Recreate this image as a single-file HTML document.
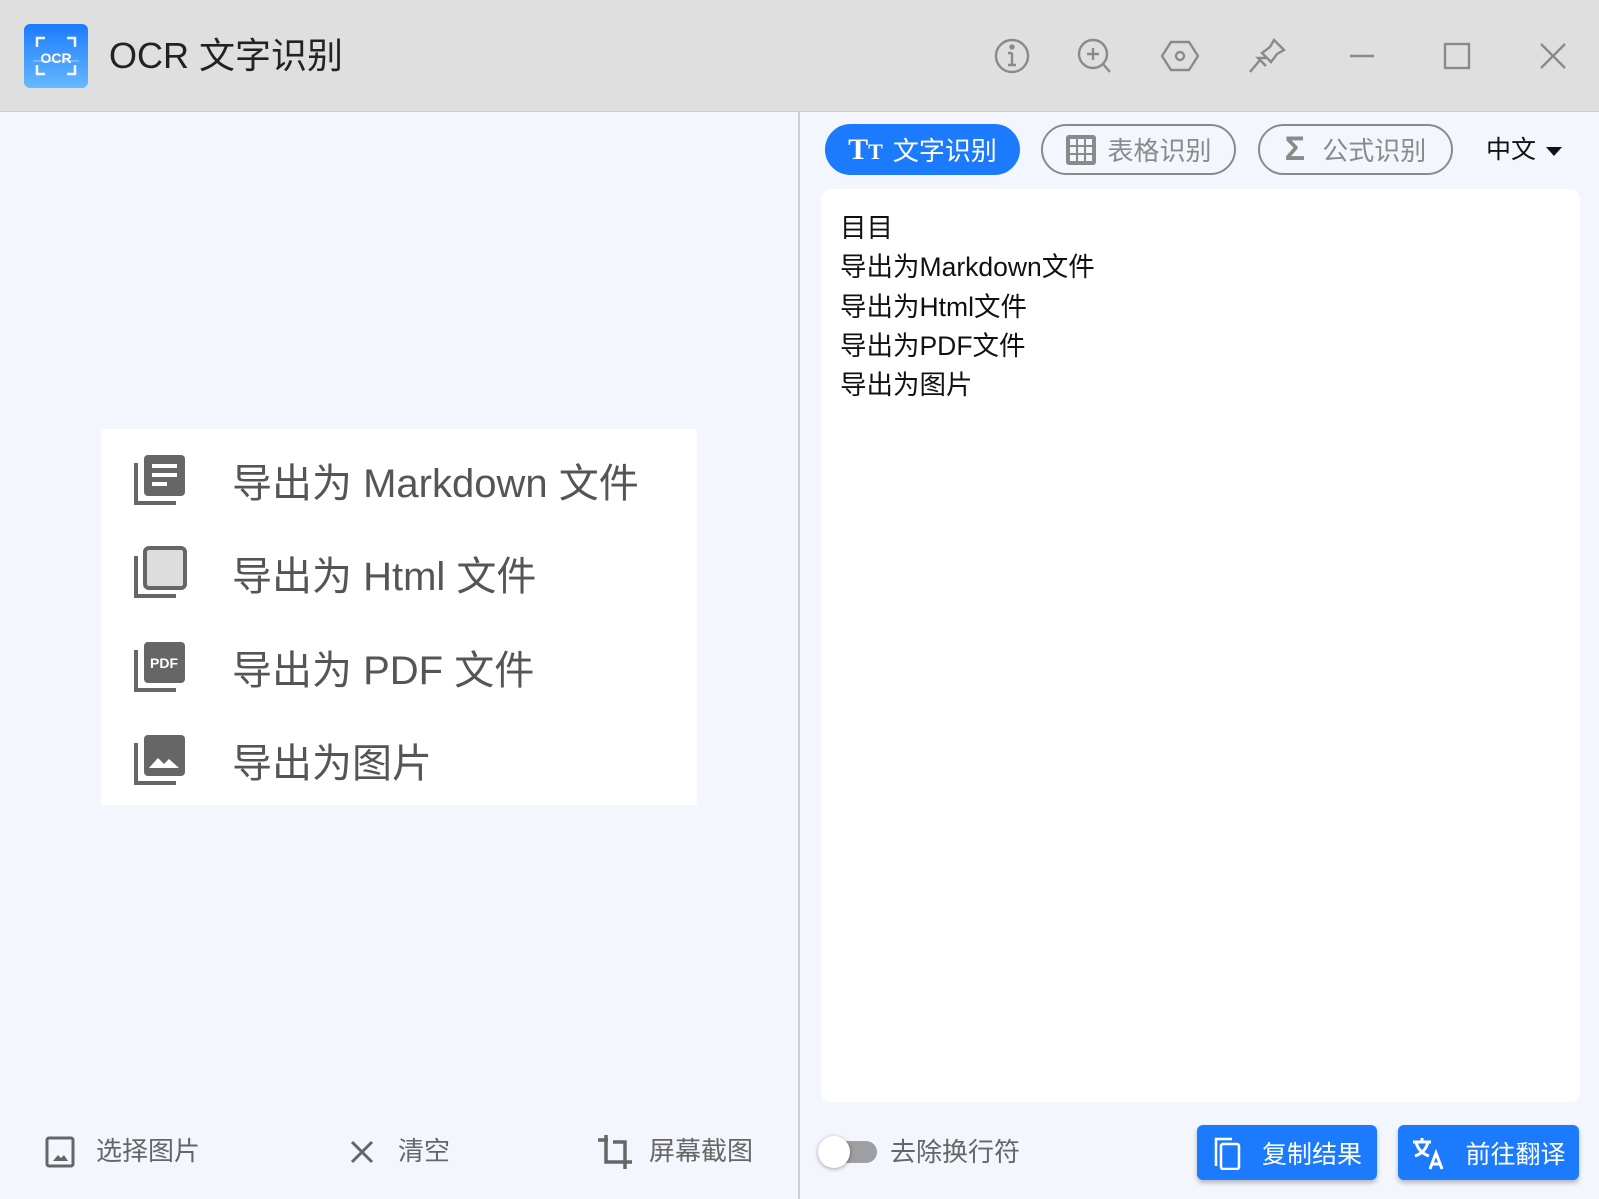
<!DOCTYPE html>
<html><head><meta charset="utf-8"><style>
*{margin:0;padding:0;box-sizing:border-box}
body{width:1599px;height:1199px;background:#f3f6fd;font-family:"Liberation Sans","Noto Sans CJK SC",sans-serif;position:relative;overflow:hidden}
.a{position:absolute}
.title{left:0;top:0;width:1599px;height:112px;background:#dfdfdf;border-bottom:1px solid #d0d0d0}
.t{white-space:nowrap;line-height:1}
svg{display:block}
.pill{height:51px;border-radius:26px;border:2px solid #8a8a8a;color:#8a8a8a;font-size:26px;display:flex;align-items:center;justify-content:center;gap:10px}
.btn{background:#1c7bfd;color:#fff;border-radius:6px;font-size:25px;display:flex;align-items:center;justify-content:center;gap:20px;box-shadow:0 3px 5px rgba(0,0,0,.25)}
.row{display:flex;align-items:center;position:absolute;left:133px;font-size:40px;color:#555}
.row span{margin-left:45px}
.bt{font-size:26px;color:#666}
</style></head><body>
<div class="a title"></div>
<div class="a" style="left:24px;top:24px;width:64px;height:64px;border-radius:6px;background:linear-gradient(#1c7bfd,#66b8ff)">
<svg width="64" height="64"><g fill="none" stroke="#fff" stroke-width="2.5" opacity=".95"><path d="M13 23V14h8M43 14h8v9M13 41v9h8M43 50h8v-9"/></g><text x="32" y="39" fill="#fff" font-size="14" font-weight="bold" text-anchor="middle" font-family="Liberation Sans">OCR</text><path d="M9 37H55" stroke="#fff" opacity=".5"/></svg></div>
<div class="a t" style="left:109px;top:38px;font-size:36px;color:#222">OCR 文字识别</div>
<svg class="a" style="left:992px;top:36px" width="580" height="40" fill="none" stroke="#8a8a8a" stroke-width="2.4">
<circle cx="20" cy="20" r="16"/><path d="M20 17v12M16 29h8M16 17h4"/><circle cx="20" cy="11" r="1.5" fill="#8a8a8a"/>
<circle cx="101" cy="18" r="14"/><path d="M111 28l7 8M101 12v12M95 18h12"/>
<path d="M179 6h18l9 14-9 14h-18l-9-14z"/><circle cx="188" cy="20" r="4"/>
<path d="M282 4l10 10-7 4-6 8-9-9 8-6zM274 22l-8 0 8 8M268 24l-10 12"/>
<path d="M358 20h24"/>
<rect x="453" y="8" width="24" height="24"/>
<path d="M549 8l24 24M573 8l-24 24"/>
</svg>
<div class="a" style="left:798px;top:112px;width:2px;height:1087px;background:#cfcfd3"></div>
<div class="a pill" style="left:825px;top:124px;width:195px;background:#1c7bfd;border-color:#1c7bfd;color:#fff"><b style="font-size:30px;font-family:Liberation Serif">T<small style="font-size:22px">T</small></b>文字识别</div>
<div class="a pill" style="left:1041px;top:124px;width:195px"><svg width="32" height="32"><rect x="1" y="1" width="30" height="30" rx="3" fill="#8a8a8a"/><g fill="#f3f6fd"><rect x="5" y="5" width="6" height="6"/><rect x="13" y="5" width="6" height="6"/><rect x="21" y="5" width="6" height="6"/><rect x="5" y="13" width="6" height="6"/><rect x="13" y="13" width="6" height="6"/><rect x="21" y="13" width="6" height="6"/><rect x="5" y="21" width="6" height="6"/><rect x="13" y="21" width="6" height="6"/><rect x="21" y="21" width="6" height="6"/></g></svg>表格识别</div>
<div class="a pill" style="left:1258px;top:124px;width:195px"><b style="font-size:34px">Σ</b>&nbsp;公式识别</div>
<div class="a t" style="left:1486px;top:138px;font-size:25px;color:#111">中文</div>
<div class="a" style="left:1546px;top:147px;border-left:8px solid transparent;border-right:8px solid transparent;border-top:9px solid #111"></div>
<div class="a" style="left:821px;top:189px;width:759px;height:913px;background:#fff;border-radius:10px"></div>
<div class="a" style="left:840px;top:209px;font-size:26.5px;line-height:39.3px;color:#111">目目<br>导出为Markdown文件<br>导出为Html文件<br>导出为PDF文件<br>导出为图片</div>
<div class="a" style="left:101px;top:429px;width:596px;height:376px;background:#fff"></div>
<div class="row" style="top:451px"><svg width="54" height="54"><path d="M3 10v40h40" fill="none" stroke="#666" stroke-width="4"/><rect x="11" y="2" width="41" height="41" rx="4" fill="#666"/><g fill="#fff"><rect x="19" y="11" width="25" height="4"/><rect x="19" y="20" width="25" height="4"/><rect x="19" y="29" width="15" height="4"/></g></svg><span>导出为 Markdown 文件</span></div>
<div class="row" style="top:544px"><svg width="54" height="54"><path d="M3 10v40h40" fill="none" stroke="#666" stroke-width="4"/><rect x="12" y="2" width="40" height="40" rx="4" fill="#ddd" stroke="#666" stroke-width="4"/></svg><span>导出为 Html 文件</span></div>
<div class="row" style="top:638px"><svg width="54" height="54"><path d="M3 10v40h40" fill="none" stroke="#666" stroke-width="4"/><rect x="11" y="2" width="41" height="41" rx="4" fill="#666"/><text x="31" y="28" fill="#fff" font-size="14" font-weight="bold" text-anchor="middle" font-family="Liberation Sans">PDF</text></svg><span>导出为 PDF 文件</span></div>
<div class="row" style="top:731px"><svg width="54" height="54"><path d="M3 10v40h40" fill="none" stroke="#666" stroke-width="4"/><rect x="11" y="2" width="41" height="41" rx="4" fill="#666"/><path d="M16 35l9-10 6 6 5-5 10 9z" fill="#fff"/></svg><span>导出为图片</span></div>
<svg class="a" style="left:45px;top:1136px" width="30" height="32"><rect x="2" y="2" width="26" height="28" rx="2" fill="none" stroke="#666" stroke-width="3"/><path d="M8 25l5-6 3 3 3-3 4 6z" fill="#666"/></svg>
<div class="a t bt" style="left:96px;top:1138px">选择图片</div>
<svg class="a" style="left:350px;top:1140px" width="24" height="24"><path d="M2 2l20 20M22 2L2 22" stroke="#666" stroke-width="3"/></svg>
<div class="a t bt" style="left:398px;top:1138px">清空</div>
<svg class="a" style="left:596px;top:1133px" width="36" height="38"><path d="M2 7h10M10 2v27h27M17 9h12v27" fill="none" stroke="#666" stroke-width="3.5"/></svg>
<div class="a t bt" style="left:649px;top:1138px">屏幕截图</div>
<div class="a" style="left:823px;top:1141px;width:54px;height:22px;border-radius:11px;background:#9e9ea3"></div>
<div class="a" style="left:818px;top:1136px;width:32px;height:32px;border-radius:16px;background:#fff;box-shadow:0 1px 4px rgba(0,0,0,.35)"></div>
<div class="a t bt" style="left:890px;top:1139px">去除换行符</div>
<div class="a btn" style="left:1197px;top:1125px;width:180px;height:55px"><svg width="30" height="34" fill="none" stroke="#fff" stroke-width="2.5"><path d="M4 30V3h16"/><rect x="9" y="8" width="18" height="25" rx="2"/></svg>复制结果</div>
<div class="a btn" style="left:1398px;top:1125px;width:181px;height:55px"><svg width="34" height="34" fill="none" stroke="#fff" stroke-width="3"><path d="M2 6h18M11 2v4M5 6c2 8 7 12 13 14M17 6c-2 8-7 12-13 14"/><path d="M19 33l6-16 6 16M21 28h8"/></svg>前往翻译</div>
</body></html>
